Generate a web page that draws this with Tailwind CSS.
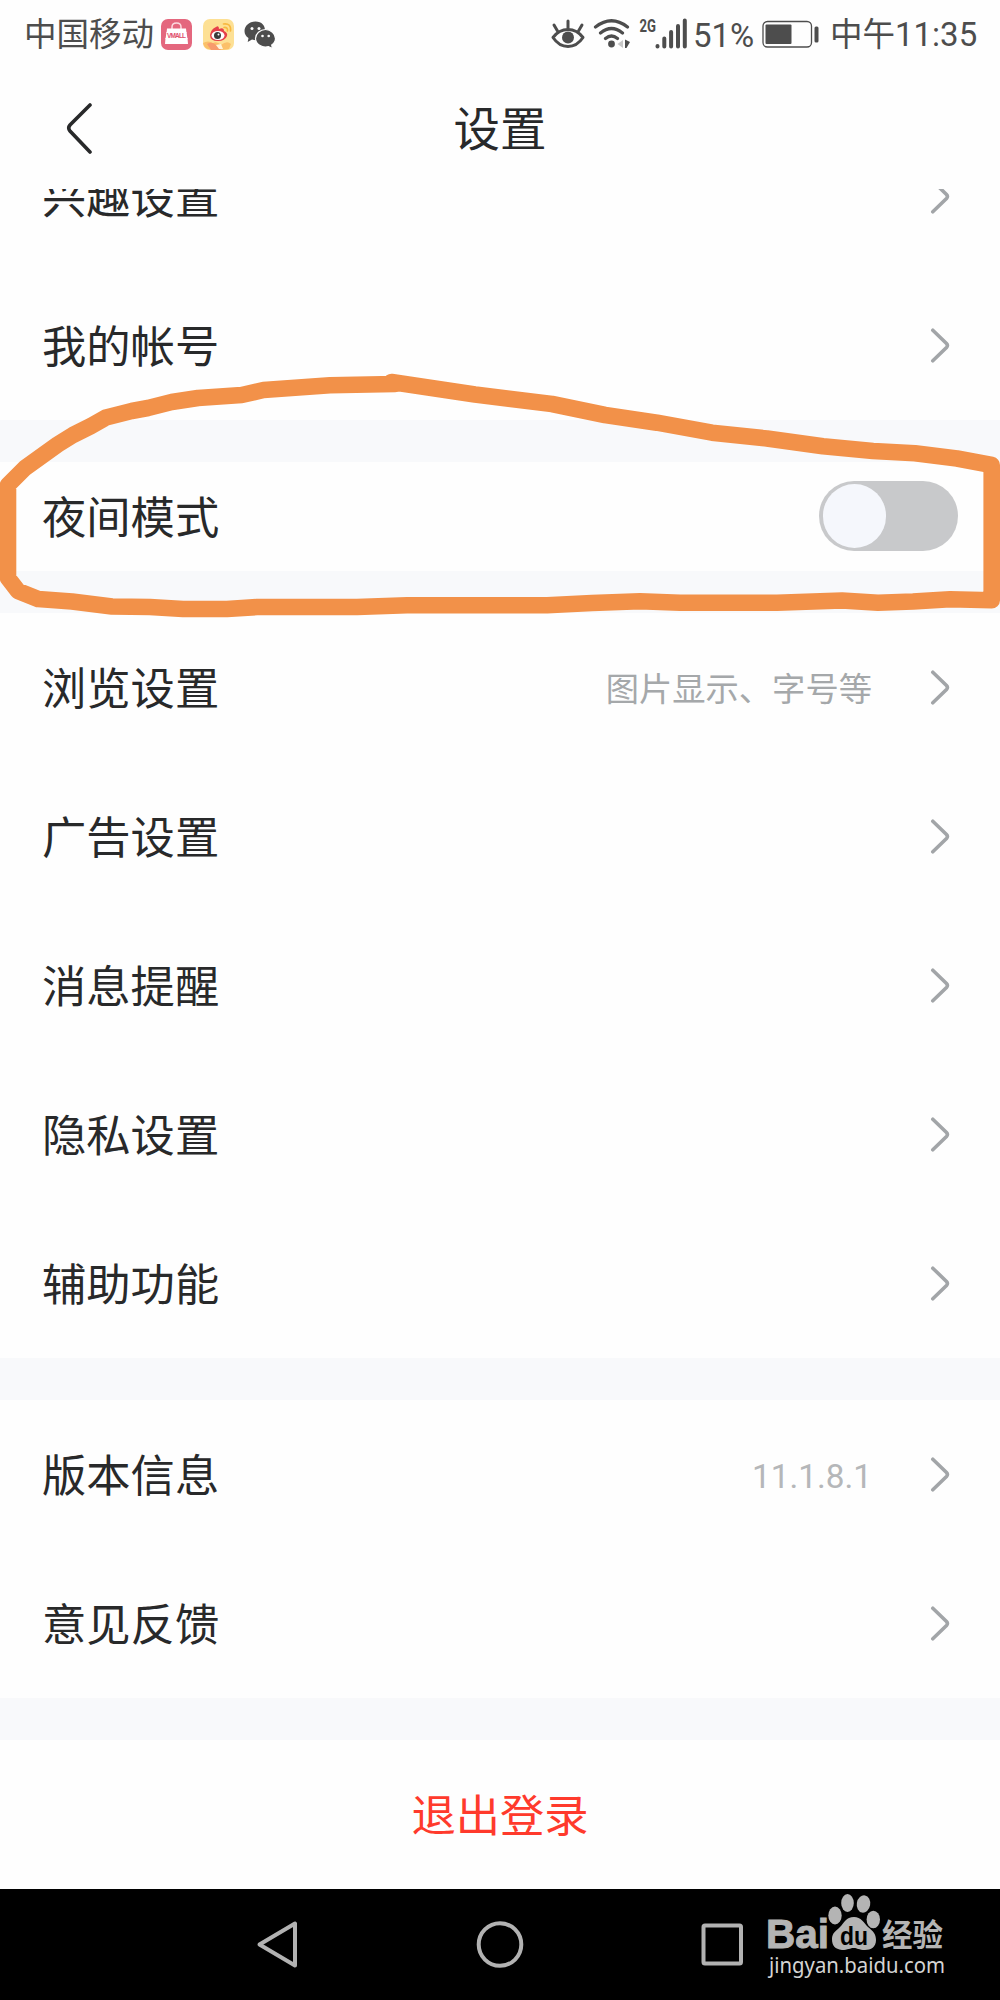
<!DOCTYPE html>
<html lang="zh-CN">

<head>
    <meta charset="UTF-8">
    <meta name="viewport" content="width=device-width, initial-scale=1.0">
    <title>设置</title>
    <script src="https://cdn.jsdelivr.net/npm/@tailwindcss/browser@4"></script>
</head>

<body class="relative w-[1000px] h-[2000px] overflow-hidden bg-[#fefefe] text-[#28292a] font-[Roboto,'Noto_Sans_CJK_SC',sans-serif]">
    <svg class="hidden">
        <symbol id="chevron" viewBox="0 0 20 36">
            <path d="M2.800 2.200 L16.500 15.500 Q18.300 17.500 16.500 19.500 L2.800 32.800" fill="none" stroke="#a2a5a8" stroke-width="3.6" stroke-linecap="round" />
        </symbol>
    </svg>

    <!-- status bar -->
    <div class="flex items-center justify-between h-[68px] pl-6 pr-[23px] text-[33px] leading-none text-[#4d4d4d]">
        <div class="flex items-center">
            <span class="pt-[3px] text-[32.5px]">中国移动</span>
            <svg class="ml-[7px] w-[31px] h-[31px]" viewBox="0 0 31 31">
                <rect width="31" height="31" rx="7" fill="#e4677e" />
                <path d="M11 13 V8 Q11 4 15.500 4 Q20 4 20 8 V13" fill="none" stroke="#fbd9df" stroke-width="1.5" />
                <path d="M6 9.500 H25 L25.500 14 H5.500 Z M4.500 19 H26.500 L27 25 H4 Z" fill="#fff" />
                <path d="M5.500 13 H25.500 L26.500 20 H4.500 Z" fill="#fff" />
                <text x="15.500" y="19" text-anchor="middle" font-size="6.500" font-weight="700" font-family="Liberation Sans" textLength="19" fill="#e0506c">VMALL</text>
            </svg>
            <svg class="ml-[11px] w-[31px] h-[31px]" viewBox="0 0 31 31">
                <rect width="31" height="31" rx="7" fill="#fde094" />
                <path d="M0 24 Q5 21 10 24 Q14 22 18 26 Q24 21 28 25 L26 30 Q15 32 5 30 Q1 29 0 24" fill="#fbc069" />
                <path d="M4 25 Q9 22 13 26 L18 31 H8 Z" fill="#f79b6c" />
                <path d="M13 26 l5 -1 l2 5 h-4z" fill="#fff3d8" />
                <path d="M7 16 Q8 10 13 8 Q16 6 16 10 Q21 8 21 12 Q25 14 24 17 Q22 22 15 22 Q7 22 7 16" fill="#e6404a" />
                <ellipse cx="15" cy="16.500" rx="6.500" ry="4.500" fill="#fff" />
                <circle cx="14.500" cy="16.500" r="3.500" fill="#3b3b3b" />
                <circle cx="15.500" cy="15.500" r="1" fill="#fff" />
                <path d="M21 8.500 Q25 8 24.500 12 M20.500 5 Q28.500 4 27.500 12" fill="none" stroke="#f8b840" stroke-width="1.700" stroke-linecap="round" />
            </svg>
            <svg class="ml-[10px] w-[32px] h-[31px]" viewBox="0 0 32 31">
                <path d="M11.500 2.500 C5 2.500 .5 7 .5 12 C.5 15 2 17.500 4.500 19 L3.700 23 L8 20.500 Q13 22 16 20 C23.500 16 23 2.500 11.500 2.500" fill="#4d4d4d" />
                <path d="M21.500 10.500 C16 10.500 11.500 15 11.500 19.500 C11.500 25 18 29.500 24.500 27.700 L28.500 29.500 L27.700 26 C30 24.500 31.500 22 31.500 19.500 C31.500 15 27 10.500 21.500 10.500" fill="#4d4d4d" stroke="#fefefe" stroke-width="1.200" />
                <g fill="#fefefe">
                    <circle cx="8" cy="9.500" r="1.500" />
                    <circle cx="15" cy="9.500" r="1.500" />
                    <circle cx="18.500" cy="17" r="1.300" />
                    <circle cx="24.700" cy="17" r="1.300" />
                </g>
            </svg>
        </div>

        <div class="flex items-center">
            <svg class="w-[34px] h-[32px]" viewBox="0 0 34 32">
                <path d="M2 19.500 Q8 11.500 17 11.500 Q26 11.500 32 19.500 Q26 28.500 17 28.500 Q8 28.500 2 19.500 Z M17 3 V11 M3 7 L6.500 13 M31 7 L27.500 13" fill="none" stroke="#4d4d4d" stroke-width="3" stroke-linecap="round" stroke-linejoin="round" />
                <circle cx="17" cy="19.500" r="6" fill="#4d4d4d" />
            </svg>
            <svg class="ml-2 w-[38px] h-[32px]" viewBox="0 0 38 32">
                <path d="M2.500 9 Q18.500 -3.500 34.500 9 M7.500 15 Q18.500 6 29.500 15 M12.500 20.500 Q18.500 15.500 24.500 20.500" fill="none" stroke="#4d4d4d" stroke-width="3.200" stroke-linecap="round" />
                <circle cx="18.500" cy="26" r="3.400" fill="#4d4d4d" />
                <path d="M30 22 V30 L24.500 26 Z" fill="#c8c8c8" />
                <path d="M32 21.500 L37 24 L33.500 30 H32 Z" fill="#4d4d4d" />
            </svg>
            <svg class="ml-[8px] w-[50px] h-[34px]" viewBox="0 0 50 34">
                <text x="0.500" y="15" font-family="Roboto" font-weight="700" font-size="18.500" textLength="16.500" lengthAdjust="spacingAndGlyphs" fill="#4d4d4d">2G</text>
                <path d="M18.500 29.500 V29 M25.300 29.500 V21.500 M32.100 29.500 V15 M39 29.500 V9 M45.800 29.500 V3.500" fill="none" stroke="#4d4d4d" stroke-width="4" stroke-linecap="round" />
            </svg>
            <span class="ml-[4px] w-[60px] pt-[2px]">51%</span>
            <svg class="ml-[9px] w-[57px] h-[28px]" viewBox="0 0 57 28">
                <rect x="1" y="1.500" width="48.500" height="25.500" rx="4.500" fill="none" stroke="#4d4d4d" stroke-width="1.300" />
                <rect x="3.500" y="4.500" width="26" height="19.500" rx="1" fill="#4d4d4d" />
                <rect x="52.500" y="6.500" width="4" height="16" rx="1.500" fill="#4d4d4d" />
            </svg>
            <span class="ml-[11px] w-[147px] pt-[2px] whitespace-nowrap"><span class="text-[32.5px]">中午</span>11:35</span>
        </div>
    </div>

    <!-- title bar -->
    <header class="flex items-center h-[121px] px-[66px]">
        <svg class="w-[27px] h-[52px]" viewBox="0 0 27 52">
            <path d="M24 2 L4 22 Q1.500 25 4 28 L24 49" fill="none" stroke="#28292a" stroke-width="3.600" stroke-linecap="round" />
        </svg>
        <h1 class="flex-1 mr-[27px] pt-[4px] text-center text-[46.5px] leading-none">设置</h1>
    </header>

    <main class="text-[44.3px] leading-none">
        <!-- first row is scrolled partly under the title bar -->
        <div class="flex items-end h-[82px] overflow-hidden">
            <div class="flex shrink-0 items-center justify-between w-full h-[149px] pl-[42px] pr-[50px]">
                <span class="pt-[5px]">兴趣设置</span>
                <svg class="w-[20px] h-[36px]"><use href="#chevron" /></svg>
            </div>
        </div>
        <div class="flex items-center justify-between h-[149px] pl-[42px] pr-[50px]">
            <span class="pt-[5px]">我的帐号</span>
            <svg class="w-[20px] h-[36px]"><use href="#chevron" /></svg>
        </div>

        <div class="border-y-[42px] border-[#f8f9fb]">
            <div class="flex items-center justify-between h-[109px] pl-[42px] pr-[42px]">
                <span class="pt-[5px]">夜间模式</span>
                <div class="flex items-center w-[139px] h-[70px] mb-px pl-1 rounded-full bg-[#c8c9cb]">
                    <div class="w-[63px] h-[64px] rounded-full bg-[#f5f7fc]"></div>
                </div>
            </div>
        </div>

        <div class="flex items-center h-[149px] pl-[42px] pr-[50px]">
            <span class="pt-[5px]">浏览设置</span>
            <span class="ml-auto mr-[58px] pt-[4px] text-[33.3px] text-[#a5a8aa]">图片显示、字号等</span>
            <svg class="w-[20px] h-[36px]"><use href="#chevron" /></svg>
        </div>
        <div class="flex items-center justify-between h-[149px] pl-[42px] pr-[50px]">
            <span class="pt-[5px]">广告设置</span>
            <svg class="w-[20px] h-[36px]"><use href="#chevron" /></svg>
        </div>
        <div class="flex items-center justify-between h-[149px] pl-[42px] pr-[50px]">
            <span class="pt-[5px]">消息提醒</span>
            <svg class="w-[20px] h-[36px]"><use href="#chevron" /></svg>
        </div>
        <div class="flex items-center justify-between h-[149px] pl-[42px] pr-[50px]">
            <span class="pt-[5px]">隐私设置</span>
            <svg class="w-[20px] h-[36px]"><use href="#chevron" /></svg>
        </div>
        <div class="flex items-center justify-between h-[149px] pl-[42px] pr-[50px]">
            <span class="pt-[5px]">辅助功能</span>
            <svg class="w-[20px] h-[36px]"><use href="#chevron" /></svg>
        </div>

        <div class="border-y-[42px] border-[#f8f9fb]">
            <div class="flex items-center h-[149px] pl-[42px] pr-[50px]">
                <span class="pt-[5px]">版本信息</span>
                <span class="ml-auto mr-[58px] pt-[4px] text-[33.3px] text-[#b5b7b9]">11.1.8.1</span>
                <svg class="w-[20px] h-[36px]"><use href="#chevron" /></svg>
            </div>
            <div class="flex items-center justify-between h-[149px] pl-[42px] pr-[50px]">
                <span class="pt-[5px]">意见反馈</span>
                <svg class="w-[20px] h-[36px]"><use href="#chevron" /></svg>
            </div>
        </div>

        <div class="flex items-center justify-center h-[149px] pt-[5px] text-[#ff3a2c]">退出登录</div>
    </main>

    <!-- navigation bar -->
    <nav class="flex h-[111px] bg-black">
        <svg class="w-full h-full" viewBox="0 0 1000 111">
            <g fill="none" stroke="#b2b2b2" stroke-width="4" stroke-linejoin="round">
                <path d="M259.500 55.500 L295 34.500 V76.500 Z" />
                <circle cx="500" cy="55.500" r="21.300" />
                <rect x="703.500" y="36.500" width="37.500" height="38" rx="1.500" />
            </g>
            <g fill="#b4b4b4">
                <text x="766" y="59" font-family="Liberation Sans" font-weight="700" font-size="40" textLength="63" lengthAdjust="spacingAndGlyphs" stroke="#b4b4b4">Bai</text>
                <ellipse cx="835" cy="26.500" rx="6.700" ry="9" />
                <ellipse cx="847.500" cy="14" rx="6.300" ry="9" />
                <ellipse cx="863.500" cy="15" rx="6.700" ry="8.700" transform="rotate(10 863.500 15)" />
                <ellipse cx="873.300" cy="30.500" rx="6.700" ry="8.700" />
                <path d="M854 28 C861 28 864 34 868 38 C873 42 876 45 876 51 C876 58 871 61 865 61 C859 61 857 59 854 59 C850 59 848 61 842 61 C835 60 832 57 832 50 C832 44 836 42 840 38 C844 34 846 28 854 28" />
                <text x="840" y="55.500" font-family="Liberation Sans" font-weight="700" font-size="25" textLength="28" lengthAdjust="spacingAndGlyphs" fill="#000">du</text>
                <text x="882" y="56.500" font-family="Noto Sans CJK SC" font-weight="700" font-size="30.500">经验</text>
                <text x="769" y="83.500" font-family="Noto Sans" font-size="21.500" textLength="176" lengthAdjust="spacingAndGlyphs" fill="#d4d4d4">jingyan.baidu.com</text>
            </g>
        </svg>
    </nav>

    <!-- hand-drawn ring around the night mode row -->
    <svg class="absolute left-0 top-[360px] w-[1000px] h-[280px]" viewBox="0 360 1000 280">
        <path d="M395 384 L330 385.300 L263.500 390 L241.700 395 L198 398 L171.700 402 L148 408 L131.700 411 L106 417.500 L91 426 L73 435 L57.700 444.500 L25 468 L8 485 V578 L18 591 L38 599 L72 601.500 L112 606.500 L150 607 L183 609 H227 L257 607 H357 L407 605.300 H547 L592 603 L640 601.300 L680 602.700 H777 L842 600.500 L878 602.700 L913 601.500 L950 599.300 L991.700 600.300 V465 L957 458.500 L915 453.300 L873 451 L823 446.300 L767 438.500 L712 432.700 L657 422.700 L605 415 L552 404 L475 394.500 L391.500 382" fill="none" stroke="#f29149" stroke-width="16.600" stroke-linejoin="round" stroke-linecap="round" />
    </svg>
</body>

</html>
